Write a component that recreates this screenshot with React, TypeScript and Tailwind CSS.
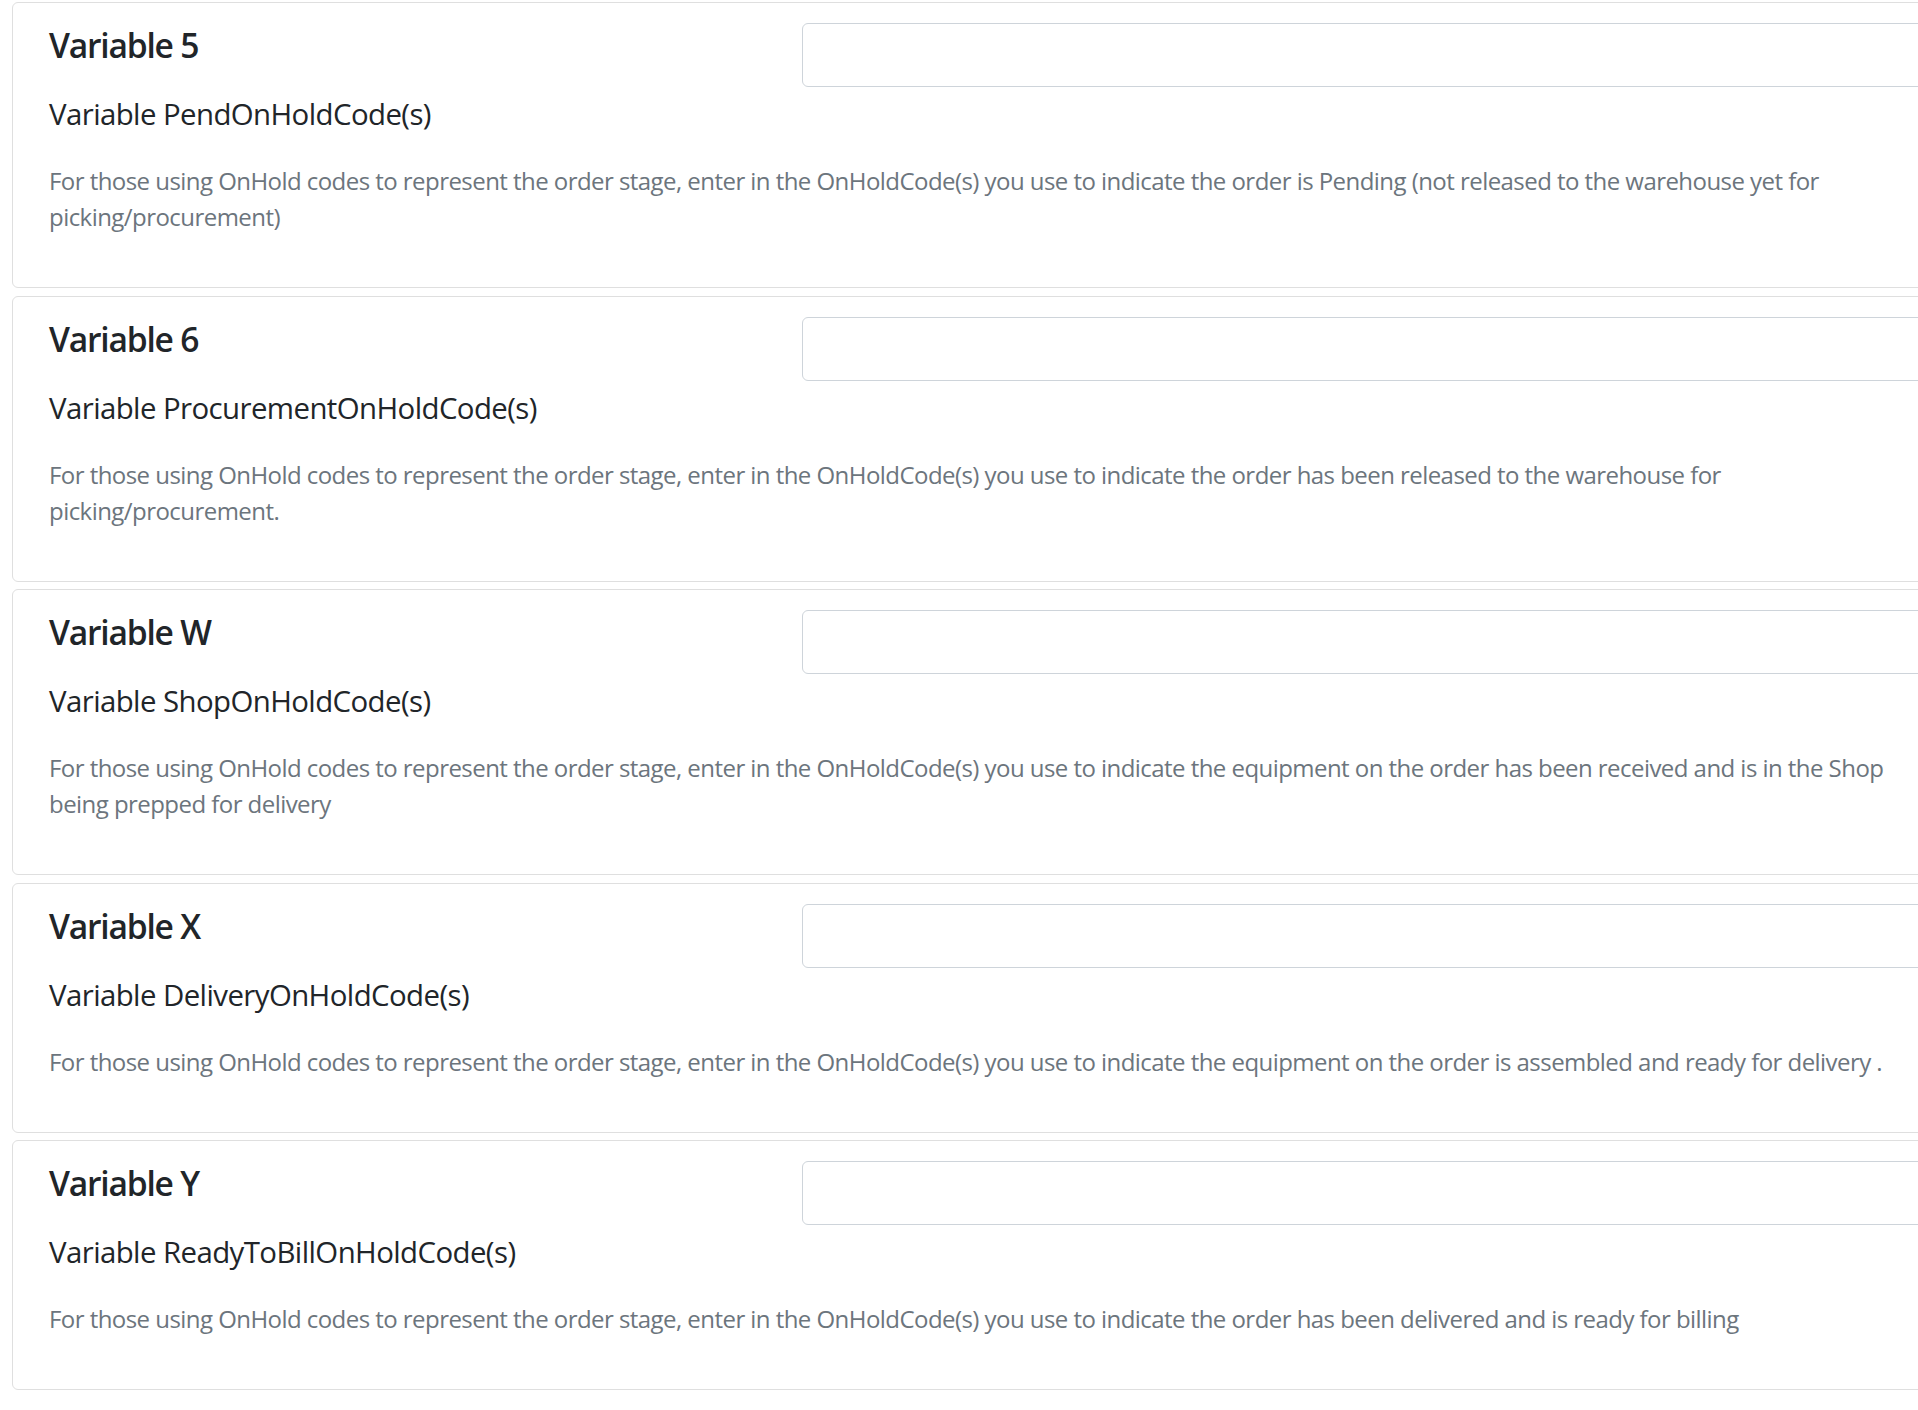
import React from "react";

const items = [
  {
    title: "Variable 5",
    sub: "Variable PendOnHoldCode(s)",
    desc: "For those using OnHold codes to represent the order stage, enter in the OnHoldCode(s) you use to indicate the order is Pending (not released to the warehouse yet for picking/procurement)",
  },
  {
    title: "Variable 6",
    sub: "Variable ProcurementOnHoldCode(s)",
    desc: "For those using OnHold codes to represent the order stage, enter in the OnHoldCode(s) you use to indicate the order has been released to the warehouse for picking/procurement.",
  },
  {
    title: "Variable W",
    sub: "Variable ShopOnHoldCode(s)",
    desc: "For those using OnHold codes to represent the order stage, enter in the OnHoldCode(s) you use to indicate the equipment on the order has been received and is in the Shop being prepped for delivery",
  },
  {
    title: "Variable X",
    sub: "Variable DeliveryOnHoldCode(s)",
    desc: "For those using OnHold codes to represent the order stage, enter in the OnHoldCode(s) you use to indicate the equipment on the order is assembled and ready for delivery .",
  },
  {
    title: "Variable Y",
    sub: "Variable ReadyToBillOnHoldCode(s)",
    desc: "For those using OnHold codes to represent the order stage, enter in the OnHoldCode(s) you use to indicate the order has been delivered and is ready for billing",
  },
];

export default function App() {
  return (
    <div
      className="w-[1918px] h-[1410px] overflow-hidden bg-white pt-[2px]"
      style={{ fontFamily: '"Open Sans", "Noto Sans", sans-serif' }}
    >
      {items.map((it) => (
        <div
          key={it.title}
          className="ml-[12px] w-[2100px] mb-[7.5px] border border-[#dfdfdf] rounded-[6px] bg-white pt-[20px] pl-[36px] pb-[52px]"
        >
          <div className="flex">
            <div className="w-[753px] shrink-0">
              <h4 className="mt-[2px] text-[33.6px] leading-[40px] font-semibold tracking-[-1.2px] text-[#212529]">
                {it.title}
              </h4>
            </div>
            <div className="flex-1 h-[64px] border border-[#ced4da] rounded-[6px]" />
          </div>
          <h5 className="mt-[9px] text-[29.4px] leading-[36px] font-normal tracking-[-0.58px] text-[#212529]">
            {it.sub}
          </h5>
          <p className="mt-[31px] w-[1850px] text-[24px] leading-[36px] tracking-[-0.55px] text-[#6c757d]">
            {it.desc}
          </p>
        </div>
      ))}
    </div>
  );
}
